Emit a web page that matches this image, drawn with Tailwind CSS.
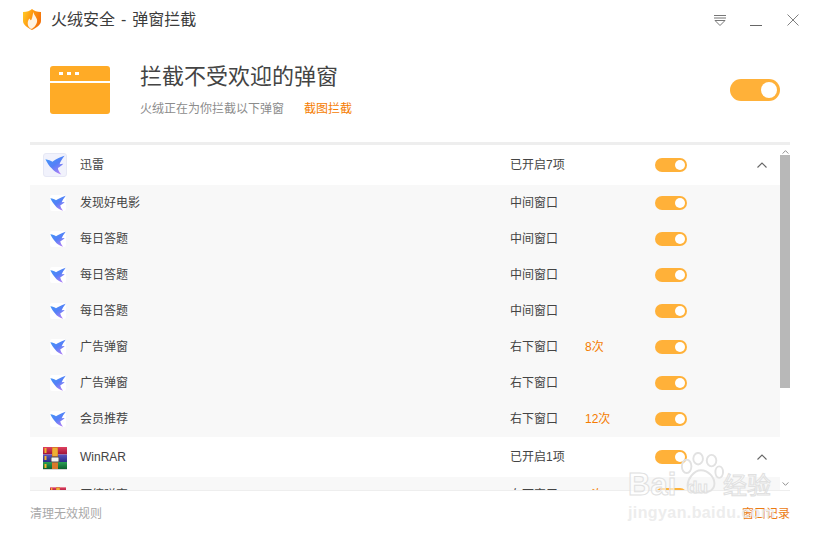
<!DOCTYPE html>
<html lang="zh">
<head>
<meta charset="utf-8">
<script src="https://cdn.jsdelivr.net/npm/@tailwindcss/browser@4"></script>
</head>
<body class="bg-white overflow-hidden font-['Liberation_Sans','Noto_Sans_CJK_SC',sans-serif]">
<svg class="absolute w-0 h-0">
  <defs>
    <linearGradient id="bg" x1="0" y1="0" x2="0.7" y2="1"><stop offset="0" stop-color="#3f9af9"/><stop offset="0.55" stop-color="#5580f7"/><stop offset="1" stop-color="#b080f5"/></linearGradient>
    <linearGradient id="r1" x1="0" y1="0" x2="0" y2="1"><stop offset="0" stop-color="#e0405f"/><stop offset="1" stop-color="#9c1338"/></linearGradient>
    <linearGradient id="r2" x1="0" y1="0" x2="0" y2="1"><stop offset="0" stop-color="#5a55c0"/><stop offset="1" stop-color="#2b2a86"/></linearGradient>
    <linearGradient id="r3" x1="0" y1="0" x2="0" y2="1"><stop offset="0" stop-color="#2aa055"/><stop offset="1" stop-color="#0d5f2e"/></linearGradient>
    <symbol id="bird" viewBox="0 0 24 24"><path d="M0.500 5 C4 5.500 7 6.500 9 8 C12 6 16 3.500 23.500 1 C20.500 5 18.500 8 17.500 11 L22 10.500 C19.500 13 17.500 14.500 15.500 15.500 C15.500 18 17.500 21 19.500 23.500 C14 21.500 10 19 8 16 C5 13 2.500 9 0.500 5 Z" fill="url(#bg)"/></symbol>
    <symbol id="rar" viewBox="0 0 24 23">
      <rect x="0" y="0" width="24" height="7.500" fill="url(#r1)"/><rect x="0" y="7.500" width="24" height="7.500" fill="url(#r2)"/><rect x="0" y="15" width="24" height="7" fill="url(#r3)"/>
      <rect x="0" y="22" width="24" height="1" fill="#d5d5d5"/>
      <rect x="1.500" y="1" width="2" height="5" fill="#f5b52a"/><rect x="1.500" y="9" width="2" height="4" fill="#f5b52a"/><rect x="1.500" y="17" width="2" height="4" fill="#f5b52a"/>
      <rect x="9" y="0" width="6" height="22" fill="#d9782a"/><rect x="9.500" y="1" width="5" height="8" rx="1" fill="#eeb035"/><rect x="8" y="10" width="8" height="5" rx="1" fill="#f4f4f4" stroke="#555" stroke-width="1"/>
    </symbol>
    <symbol id="chev" viewBox="0 0 10 6"><path d="M0.500 5.500 L5 1 L9.500 5.500" fill="none" stroke="#666" stroke-width="1.100"/></symbol>
  </defs>
</svg>

<div class="relative w-[820px] h-[540px] flex flex-col overflow-hidden">
  <!-- title bar -->
  <header class="h-[40px] flex items-center pl-[23px] shrink-0">
    <svg class="w-[18px] h-[21px] -mt-[1px]" viewBox="0 0 18 21">
      <defs>
        <linearGradient id="sh" x1="0" y1="0" x2="1" y2="0.4"><stop offset="0" stop-color="#ffd02a"/><stop offset="0.5" stop-color="#ff9a10"/><stop offset="1" stop-color="#f4740c"/></linearGradient>
      </defs>
      <path d="M0 3 C4 3 7 2 9 0 C11 2 14 3 18 3 L18 12 C18 16 13 19 9 21 C5 19 0 16 0 12 Z" fill="url(#sh)"/>
      <path d="M10.500 3 C11 7 15 9 14 13 C13 17 9.500 20 8 20 C4.500 18 3.500 13 6.500 9.500 C7.500 11.500 8 11.500 8.500 10.500 C9.500 8 9.500 6 10.500 3 Z" fill="#fff3e2"/>
    </svg>
    <div class="ml-[10px] text-[16px] leading-[20px] text-[#3c3c3c] -mt-[1px] [word-spacing:1.5px]">火绒安全 - 弹窗拦截</div>
    <div class="ml-auto flex items-center">
      <svg class="w-[14px] h-[12px] mr-[23px] mt-[1px]" viewBox="0 0 14 12"><path d="M1 0.500 H13 M1 3 H13" stroke="#777" stroke-width="1" fill="none"/><path d="M2 5.500 H12 L7 10.500 Z" stroke="#777" stroke-width="1" fill="none"/></svg>
      <div class="w-[12px] h-[1px] bg-[#666] mt-[10px] mr-[25px]"></div>
      <svg class="w-[12px] h-[12px] mr-[21px] -mt-[1px]" viewBox="0 0 12 12"><path d="M0.500 0.500 L11.500 11.500 M11.500 0.500 L0.500 11.500" stroke="#808080" stroke-width="1" fill="none"/></svg>
    </div>
  </header>

  <!-- hero -->
  <section class="h-[102px] shrink-0 flex pl-[50px] pr-[40px]">
    <div class="w-[60px] h-[48px] mt-[26px] rounded-[3px] bg-[#ffab26] shrink-0 flex flex-col overflow-hidden">
      <div class="h-[15px] flex items-center gap-[4px] pl-[9px] pb-[1px]">
        <span class="w-[4px] h-[3px] bg-white"></span><span class="w-[4px] h-[3px] bg-white"></span><span class="w-[4px] h-[3px] bg-white"></span>
      </div>
      <div class="h-[2px] bg-white"></div>
    </div>
    <div class="ml-[30px] flex-1">
      <h1 class="text-[22px] leading-[30px] mt-[22px] font-normal text-[#444]">拦截不受欢迎的弹窗</h1>
      <div class="flex text-[12px] leading-[16px] mt-[9px]">
        <span class="text-[#8c8c8c]">火绒正在为你拦截以下弹窗</span>
        <span class="ml-[20px] text-[#f57c00]">截图拦截</span>
      </div>
    </div>
    <div class="w-[50px] h-[22px] mt-[39px] rounded-full bg-[#ffb139] flex items-center justify-end pr-[3px] shrink-0">
      <span class="w-[16px] h-[16px] rounded-full bg-white"></span>
    </div>
  </section>

  <!-- list -->
  <main class="relative h-[349px] shrink-0 mx-[30px] border-t-[3px] border-b border-[#eeeeee] overflow-hidden text-[12px] text-[#444]">
    <div class="w-[750px]">
      <!-- group -->
      <div class="h-[40px] flex items-center bg-white">
        <div class="w-[24px] h-[24px] ml-[13px] rounded-[3px] bg-[#f1f2fc] border border-[#e6e8f5] flex items-center justify-center"><svg class="w-[20px] h-[20px]"><use href="#bird"/></svg></div>
        <span class="ml-[13px] w-[430px]">迅雷</span><span class="w-[145px]">已开启7项</span>
        <span class="w-[32px] h-[14px] rounded-full bg-[#ffb139] flex items-center justify-end pr-[2px]"><i class="w-[10px] h-[10px] rounded-full bg-white"></i></span>
        <svg class="w-[10px] h-[6px] ml-[70px]"><use href="#chev"/></svg>
      </div>
      <div class="bg-[#f8f8f8]">
        <div class="h-[36px] flex items-center">
          <div class="w-[16px] h-[16px] ml-[20px] bg-white rounded-[2px]"><svg class="w-[16px] h-[16px]"><use href="#bird"/></svg></div>
          <span class="ml-[14px] w-[430px]">发现好电影</span><span class="w-[75px]">中间窗口</span><span class="w-[70px] text-[#f57c00]"></span>
          <span class="w-[32px] h-[14px] rounded-full bg-[#ffb139] flex items-center justify-end pr-[2px]"><i class="w-[10px] h-[10px] rounded-full bg-white"></i></span>
        </div>
        <div class="h-[36px] flex items-center">
          <div class="w-[16px] h-[16px] ml-[20px] bg-white rounded-[2px]"><svg class="w-[16px] h-[16px]"><use href="#bird"/></svg></div>
          <span class="ml-[14px] w-[430px]">每日答题</span><span class="w-[75px]">中间窗口</span><span class="w-[70px] text-[#f57c00]"></span>
          <span class="w-[32px] h-[14px] rounded-full bg-[#ffb139] flex items-center justify-end pr-[2px]"><i class="w-[10px] h-[10px] rounded-full bg-white"></i></span>
        </div>
        <div class="h-[36px] flex items-center">
          <div class="w-[16px] h-[16px] ml-[20px] bg-white rounded-[2px]"><svg class="w-[16px] h-[16px]"><use href="#bird"/></svg></div>
          <span class="ml-[14px] w-[430px]">每日答题</span><span class="w-[75px]">中间窗口</span><span class="w-[70px] text-[#f57c00]"></span>
          <span class="w-[32px] h-[14px] rounded-full bg-[#ffb139] flex items-center justify-end pr-[2px]"><i class="w-[10px] h-[10px] rounded-full bg-white"></i></span>
        </div>
        <div class="h-[36px] flex items-center">
          <div class="w-[16px] h-[16px] ml-[20px] bg-white rounded-[2px]"><svg class="w-[16px] h-[16px]"><use href="#bird"/></svg></div>
          <span class="ml-[14px] w-[430px]">每日答题</span><span class="w-[75px]">中间窗口</span><span class="w-[70px] text-[#f57c00]"></span>
          <span class="w-[32px] h-[14px] rounded-full bg-[#ffb139] flex items-center justify-end pr-[2px]"><i class="w-[10px] h-[10px] rounded-full bg-white"></i></span>
        </div>
        <div class="h-[36px] flex items-center">
          <div class="w-[16px] h-[16px] ml-[20px] bg-white rounded-[2px]"><svg class="w-[16px] h-[16px]"><use href="#bird"/></svg></div>
          <span class="ml-[14px] w-[430px]">广告弹窗</span><span class="w-[75px]">右下窗口</span><span class="w-[70px] text-[#f57c00]">8次</span>
          <span class="w-[32px] h-[14px] rounded-full bg-[#ffb139] flex items-center justify-end pr-[2px]"><i class="w-[10px] h-[10px] rounded-full bg-white"></i></span>
        </div>
        <div class="h-[36px] flex items-center">
          <div class="w-[16px] h-[16px] ml-[20px] bg-white rounded-[2px]"><svg class="w-[16px] h-[16px]"><use href="#bird"/></svg></div>
          <span class="ml-[14px] w-[430px]">广告弹窗</span><span class="w-[75px]">右下窗口</span><span class="w-[70px] text-[#f57c00]"></span>
          <span class="w-[32px] h-[14px] rounded-full bg-[#ffb139] flex items-center justify-end pr-[2px]"><i class="w-[10px] h-[10px] rounded-full bg-white"></i></span>
        </div>
        <div class="h-[36px] flex items-center">
          <div class="w-[16px] h-[16px] ml-[20px] bg-white rounded-[2px]"><svg class="w-[16px] h-[16px]"><use href="#bird"/></svg></div>
          <span class="ml-[14px] w-[430px]">会员推荐</span><span class="w-[75px]">右下窗口</span><span class="w-[70px] text-[#f57c00]">12次</span>
          <span class="w-[32px] h-[14px] rounded-full bg-[#ffb139] flex items-center justify-end pr-[2px]"><i class="w-[10px] h-[10px] rounded-full bg-white"></i></span>
        </div>
      </div>
      <!-- group -->
      <div class="h-[40px] flex items-center bg-white">
        <svg class="w-[24px] h-[23px] ml-[13px] mt-[2px]"><use href="#rar"/></svg>
        <span class="ml-[13px] w-[430px]">WinRAR</span><span class="w-[145px]">已开启1项</span>
        <span class="w-[32px] h-[14px] rounded-full bg-[#ffb139] flex items-center justify-end pr-[2px]"><i class="w-[10px] h-[10px] rounded-full bg-white"></i></span>
        <svg class="w-[10px] h-[6px] ml-[70px]"><use href="#chev"/></svg>
      </div>
      <div class="bg-[#f8f8f8]">
        <div class="h-[36px] flex items-center">
          <svg class="w-[16px] h-[16px] ml-[20px]"><use href="#rar"/></svg>
          <span class="ml-[14px] w-[430px]">压缩弹窗</span><span class="w-[75px]">右下窗口</span><span class="w-[70px] text-[#f57c00]">1次</span>
          <span class="w-[32px] h-[14px] rounded-full bg-[#ffb139] flex items-center justify-end pr-[2px]"><i class="w-[10px] h-[10px] rounded-full bg-white"></i></span>
        </div>
      </div>
    </div>
    <!-- scrollbar -->
    <div class="absolute right-0 top-0 bottom-0 w-[10px] flex flex-col items-center bg-white">
      <svg class="w-[7px] h-[4px] mt-[5px] shrink-0" viewBox="0 0 10 6"><use href="#chev"/></svg>
      <div class="w-[10px] h-[233px] mt-[1px] bg-[#b8b8b8] shrink-0"></div>
      <svg class="w-[7px] h-[4px] mt-auto mb-[4px] rotate-180 shrink-0" viewBox="0 0 10 6"><use href="#chev"/></svg>
    </div>
  </main>

  <!-- footer -->
  <footer class="flex-1 flex items-center justify-between px-[30px] text-[12px] pb-[3px]">
    <span class="text-[#a8a8a8]">清理无效规则</span>
    <span class="text-[#ec7a10]">窗口记录</span>
  </footer>

  <!-- watermark -->
  <div class="absolute left-[628px] top-[452px] w-[192px] h-[72px] pointer-events-none">
    <svg class="absolute left-[50px] top-[0px] w-[46px] h-[44px]" viewBox="0 0 48 44" fill="none" stroke="#e2e2e2" stroke-width="2">
      <ellipse cx="9" cy="14" rx="5" ry="7"/><ellipse cx="21" cy="6" rx="5" ry="6"/><ellipse cx="35" cy="8" rx="5" ry="6"/><ellipse cx="43" cy="20" rx="4" ry="6"/>
      <path d="M24 18 C16 18 10 28 10 34 C10 41 18 42 25 41 C33 42 38 38 38 32 C38 26 32 18 24 18 Z"/>
    </svg>
    <span class="absolute left-[0px] top-[17px] text-[31px] leading-[32px] font-bold text-white/60 [-webkit-text-stroke:1px_#e0e0e0] font-['Liberation_Sans']">Bai</span>
    <span class="absolute left-[59px] top-[26px] text-[17px] leading-[20px] text-white/60 font-bold [-webkit-text-stroke:1px_#e0e0e0]">du</span>
    <span class="absolute left-[95px] top-[20px] text-[24px] leading-[28px] text-white/60 [-webkit-text-stroke:1px_#e0e0e0]">经验</span>
    <span class="absolute left-[0px] top-[51px] text-[16px] leading-[20px] text-[#e8e8e8]/80 tracking-[0.4px] font-bold">jingyan.baidu.com</span>
  </div>
</div>
</body>
</html>
